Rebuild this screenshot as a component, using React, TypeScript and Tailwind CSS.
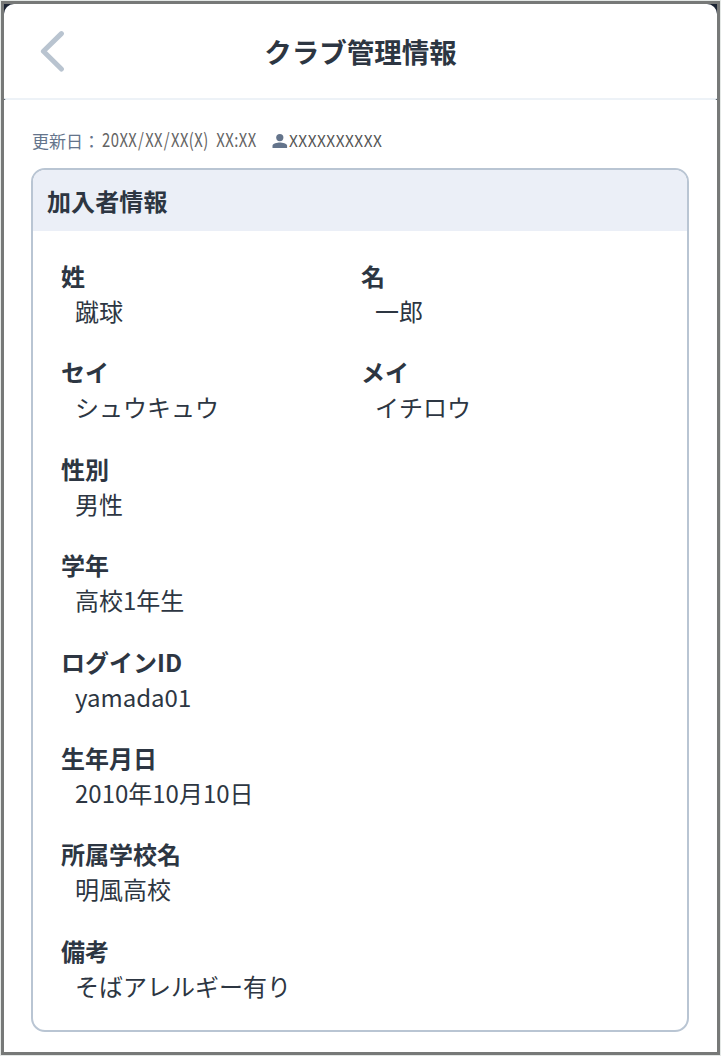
import { ReactNode } from 'react';

interface FieldProps {
  label: string;
  value: string;
}

const rows: FieldProps[][] = [
  [
    { label: '姓', value: '蹴球' },
    { label: '名', value: '一郎' },
  ],
  [
    { label: 'セイ', value: 'シュウキュウ' },
    { label: 'メイ', value: 'イチロウ' },
  ],
  [{ label: '性別', value: '男性' }],
  [{ label: '学年', value: '高校1年生' }],
  [{ label: 'ログインID', value: 'yamada01' }],
  [{ label: '生年月日', value: '2010年10月10日' }],
  [{ label: '所属学校名', value: '明風高校' }],
  [{ label: '備考', value: 'そばアレルギー有り' }],
];

const Field = ({ label, value }: FieldProps) => (
  <div className="w-[300px] whitespace-nowrap text-2xl leading-[35px]">
    <dt className="font-bold">{label}</dt>
    <dd className="pl-3.5">{value}</dd>
  </div>
);

const Header = ({ children }: { children: ReactNode }) => (
  <div className="bg-[#1a2333]">
    <header className="relative flex h-24 items-center justify-center rounded-t-[10px] rounded-b-[2px] border-b-2 border-[#edf2f7] bg-white">
      <button type="button" aria-label="戻る" className="absolute left-9 top-[26px]">
        <svg width="26" height="44" viewBox="0 0 26 44" fill="none" className="text-[#b9c4d0]">
          <path d="M21.4 3.6 3.4 21.3l18 17.7" stroke="currentColor" strokeWidth="5" strokeLinecap="round" strokeLinejoin="round" />
        </svg>
      </button>
      <h1 className="pt-0.5 text-[27.5px] font-bold">{children}</h1>
    </header>
  </div>
);

const UpdateInfo = () => (
  <div className="flex h-6 items-center whitespace-nowrap">
    <span className="w-[70px] text-[17px] text-[#64748b]">更新日：</span>
    <span className="w-[170px] pb-1 text-[19px] text-[#636363]">
      <span className="inline-block origin-left scale-x-[0.78] tracking-[0.6px]">
        20XX<span className="mx-px">/</span>XX<span className="mx-px">/</span>XX(X)&nbsp; XX:XX
      </span>
    </span>
    <svg width="16" height="14" viewBox="0 0 16 14" fill="currentColor" className="text-[#64748b]">
      <circle cx="7.8" cy="3.6" r="3.6" />
      <path d="M.5 14v-2.2C.5 9.6 5.3 8.5 7.8 8.5s7.3 1.1 7.3 3.3V14z" />
    </svg>
    <span className="ml-px text-[15.5px] tracking-[0.45px] text-[#555]">XXXXXXXXXX</span>
  </div>
);

export default function App() {
  return (
    <div className="h-[1056px] w-[721px] bg-[#e4e8e6] p-px font-['Noto_Sans_CJK_JP',sans-serif] text-[#2d3642]">
      <div className="h-[1054px] w-[719px] border-[3px] border-[#777978] bg-white">
        <Header>クラブ管理情報</Header>
        <main className="px-7 pt-[29px]">
          <UpdateInfo />
          <section className="-ml-px mt-[15px] h-[864px] w-[658px] overflow-hidden rounded-[14px] border-2 border-[#b9c5d3]">
            <h2 className="flex h-[61px] items-center bg-[#ebeff7] pt-px pl-3.5 text-2xl font-bold tracking-[0.1px]">
              加入者情報
            </h2>
            <dl className="flex flex-col gap-[26.4px] pl-7 pt-[27px]">
              {rows.map((fields) => (
                <div key={fields[0].label} className="flex">
                  {fields.map((field) => (
                    <Field key={field.label} {...field} />
                  ))}
                </div>
              ))}
            </dl>
          </section>
        </main>
      </div>
    </div>
  );
}
